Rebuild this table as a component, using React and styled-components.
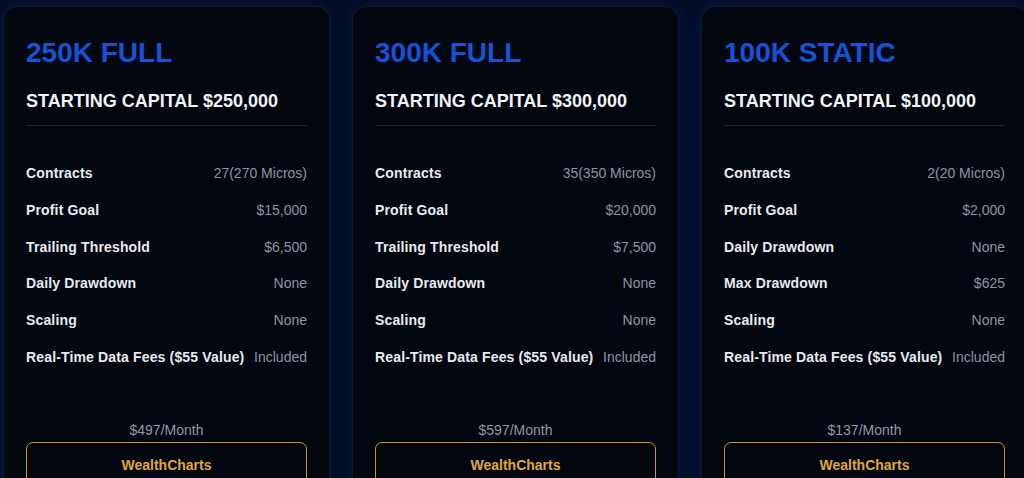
import React from "react";
import styled, { createGlobalStyle } from "styled-components";

const GlobalStyle = createGlobalStyle`
  html, body {
    margin: 0;
    padding: 0;
    background: #020c24;
    font-family: "Liberation Sans", Arial, sans-serif;
  }
`;

const Page = styled.div`
  width: 1024px;
  height: 478px;
  overflow: hidden;
  background: #020c24;
`;

const Row = styled.div`
  display: flex;
  gap: 22px;
  padding: 6px 0 0 3px;
`;

const Card = styled.div`
  flex: 0 0 327px;
  box-sizing: border-box;
  height: 520px;
  display: flex;
  flex-direction: column;
  padding: 30px 22px 0 22px;
  background: #02060f;
  border: 1px solid #121a2d;
  border-radius: 14px;
  box-shadow: 0 0 18px rgba(18, 48, 110, 0.4);
`;

const Title = styled.h2`
  margin: 0;
  font-size: 28px;
  line-height: 32px;
  font-weight: 700;
  color: #1553d8;
`;

const Capital = styled.h3`
  margin: 22px 0 0;
  padding-bottom: 14px;
  border-bottom: 1px solid #1e2637;
  font-size: 18px;
  line-height: 20px;
  font-weight: 700;
  color: #f3f4f6;
`;

const Specs = styled.div`
  display: flex;
  flex-direction: column;
  gap: 16.8px;
  margin-top: 37px;
`;

const Spec = styled.div`
  display: flex;
  justify-content: space-between;
  align-items: center;
  font-size: 14px;
  line-height: 20px;
`;

const Label = styled.span`
  font-weight: 700;
  letter-spacing: 0.15px;
  color: #e9ebef;
`;

const Value = styled.span`
  color: #8d95a2;
`;

const Price = styled.div`
  margin-top: 53px;
  text-align: center;
  font-size: 14px;
  line-height: 20px;
  color: #9199a6;
`;

const Button = styled.button`
  margin-top: 2px;
  padding: 12px 0;
  background: transparent;
  border: 1px solid #c8952f;
  border-radius: 7px;
  font-family: inherit;
  font-size: 14px;
  line-height: 20px;
  font-weight: 700;
  color: #e1a83c;
  cursor: pointer;
`;

const plans = [
  {
    name: "250K FULL",
    capital: "$250,000",
    price: "$497/Month",
    specs: [
      ["Contracts", "27(270 Micros)"],
      ["Profit Goal", "$15,000"],
      ["Trailing Threshold", "$6,500"],
      ["Daily Drawdown", "None"],
      ["Scaling", "None"],
      ["Real-Time Data Fees ($55 Value)", "Included"],
    ],
  },
  {
    name: "300K FULL",
    capital: "$300,000",
    price: "$597/Month",
    specs: [
      ["Contracts", "35(350 Micros)"],
      ["Profit Goal", "$20,000"],
      ["Trailing Threshold", "$7,500"],
      ["Daily Drawdown", "None"],
      ["Scaling", "None"],
      ["Real-Time Data Fees ($55 Value)", "Included"],
    ],
  },
  {
    name: "100K STATIC",
    capital: "$100,000",
    price: "$137/Month",
    specs: [
      ["Contracts", "2(20 Micros)"],
      ["Profit Goal", "$2,000"],
      ["Daily Drawdown", "None"],
      ["Max Drawdown", "$625"],
      ["Scaling", "None"],
      ["Real-Time Data Fees ($55 Value)", "Included"],
    ],
  },
];

const App = () => {
  return (
    <Page>
      <GlobalStyle />
      <Row>
        {plans.map((plan) => (
          <Card key={plan.name}>
            <Title>{plan.name}</Title>
            <Capital>STARTING CAPITAL {plan.capital}</Capital>
            <Specs>
              {plan.specs.map(([label, value]) => (
                <Spec key={label}>
                  <Label>{label}</Label>
                  <Value>{value}</Value>
                </Spec>
              ))}
            </Specs>
            <Price>{plan.price}</Price>
            <Button>WealthCharts</Button>
          </Card>
        ))}
      </Row>
    </Page>
  );
};

export default App;
